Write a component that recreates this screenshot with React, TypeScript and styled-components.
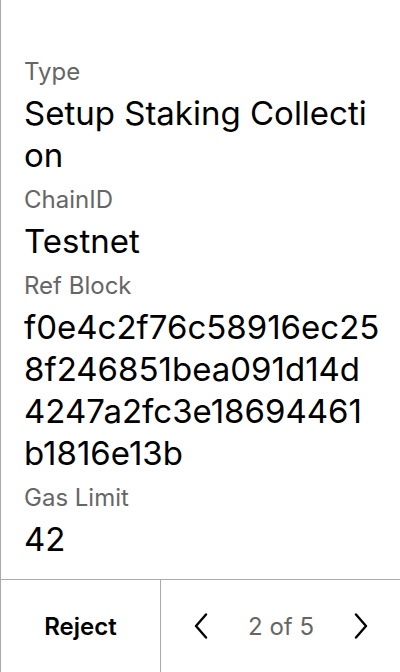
import React from "react";
import styled, { createGlobalStyle } from "styled-components";

const GlobalStyle = createGlobalStyle`
  html, body {
    margin: 0;
    padding: 0;
    background: #ffffff;
  }
  body {
    font-family: Inter, "Noto Sans", "Liberation Sans", sans-serif;
    color: #000000;
  }
`;

type Field = { label: string; value: string };

const fields: Field[] = [
    { label: "Type", value: "Setup Staking Collection" },
    { label: "ChainID", value: "Testnet" },
    { label: "Ref Block", value: "f0e4c2f76c58916ec258f246851bea091d14d4247a2fc3e18694461b1816e13b" },
    { label: "Gas Limit", value: "42" },
];

const Chevron = ({ dir }: { dir: "left" | "right" }) => (
    <svg width="14" height="26" viewBox="0 0 14 26" fill="none">
        <polyline
            points={dir === "left" ? "12,1.5 2,13 12,24.5" : "2,1.5 12,13 2,24.5"}
            stroke="#000"
            strokeWidth="2.4"
            strokeLinecap="round"
            strokeLinejoin="round"
        />
    </svg>
);

const App = () => {
    return (
        <Screen>
            <GlobalStyle />
            <Details>
                {fields.map((f) => (
                    <FieldBlock key={f.label}>
                        <Label>{f.label}</Label>
                        <Value>{f.value}</Value>
                    </FieldBlock>
                ))}
            </Details>
            <Footer>
                <RejectButton type="button">Reject</RejectButton>
                <Pager>
                    <ArrowButton type="button" aria-label="Previous"><Chevron dir="left" /></ArrowButton>
                    <PageText>2 of 5</PageText>
                    <ArrowButton type="button" aria-label="Next"><Chevron dir="right" /></ArrowButton>
                </Pager>
            </Footer>
        </Screen>
    );
};

const Screen = styled.div`
  height: 672px;
  width: 400px;
  box-sizing: border-box;
  border-left: 1px solid #aaaaaa;
  display: flex;
  flex-direction: column;
`;

const Details = styled.div`
  flex: 1;
  padding: 57px 20px 0 23px;
  display: flex;
  flex-direction: column;
  gap: 9px;
`;

const FieldBlock = styled.div`
  display: flex;
  flex-direction: column;
  gap: 5px;
`;

const Label = styled.div`
  font-size: 24px;
  line-height: 30px;
  color: #666666;
`;

const Value = styled.div`
  font-size: 33px;
  line-height: 42px;
  color: #000000;
  word-break: break-all;
`;

const Footer = styled.div`
  height: 92px;
  border-top: 1px solid #aaaaaa;
  display: grid;
  grid-template-columns: 160px 1fr;
`;

const RejectButton = styled.button`
  border: none;
  border-right: 1px solid #aaaaaa;
  background: transparent;
  font-family: inherit;
  font-size: 24px;
  font-weight: 600;
  color: #000000;
  cursor: pointer;
`;

const Pager = styled.div`
  display: flex;
  align-items: center;
  justify-content: space-between;
  padding: 0 32px 0 33px;
`;

const ArrowButton = styled.button`
  border: none;
  background: transparent;
  padding: 0;
  display: flex;
  cursor: pointer;
`;

const PageText = styled.span`
  font-size: 24px;
  color: #666666;
`;

export default App;
